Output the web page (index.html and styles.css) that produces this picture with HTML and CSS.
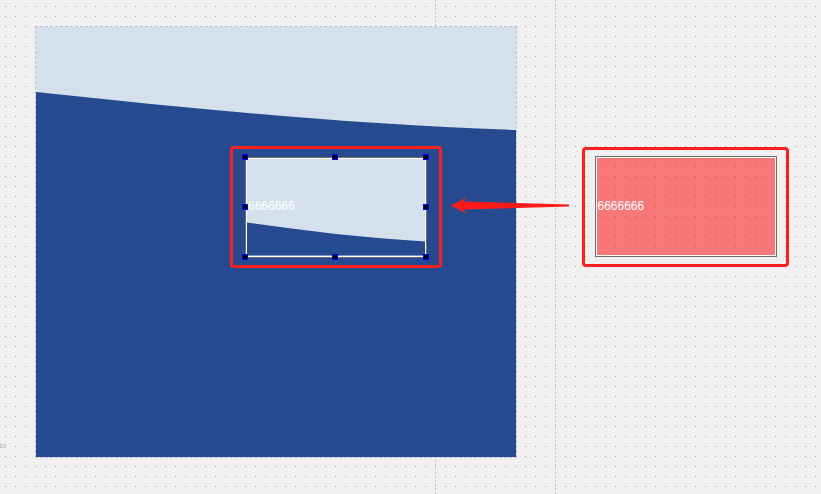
FILE: index.html
```html
<!DOCTYPE html>
<html>
<head>
<meta charset="utf-8">
<link rel="stylesheet" href="styles.css">
</head>
<body>
<div class="workspace">
  <div class="grid"></div>
  <div class="guide guide-a"></div>
  <div class="guide guide-b"></div>

  <div class="artboard">
    <svg class="art" width="480" height="430" viewBox="0 0 480 430">
      <rect x="0" y="0" width="480" height="430" fill="#d4e0ec"/>
      <path d="M0 65 C160 82 320 98 480 103 L480 430 L0 430 Z" fill="#254a8f"/>
    </svg>
  </div>

  <div class="select-box sel-left">
    <div class="frame">
      <div class="frame-inner thumb"><span class="label label-thumb">6666666</span></div>
      <span class="handle h-l h-t"></span>
      <span class="handle h-c h-t"></span>
      <span class="handle h-r h-t"></span>
      <span class="handle h-l h-m"></span>
      <span class="handle h-r h-m"></span>
      <span class="handle h-l h-b"></span>
      <span class="handle h-c h-b"></span>
      <span class="handle h-r h-b"></span>
    </div>
  </div>

  <svg class="arrow" width="128" height="26" viewBox="0 0 128 26">
    <polygon points="5,12.5 21,4 17,8.5 123,11.6 123,13.4 17,16.5 21,21" fill="#ff1a1a"/>
  </svg>

  <div class="select-box sel-right">
    <div class="frame">
      <div class="frame-inner pink"><span class="label label-pink">6666666</span></div>
    </div>
  </div>

  <div class="mini"></div>
</div>
</body>
</html>
```

FILE: styles.css
```css
html, body {
  margin: 0;
  padding: 0;
}

body {
  background: #f0f0f0;
  width: 821px;
  height: 494px;
  overflow: hidden;
  font-family: "Liberation Sans", Arial, sans-serif;
}

.workspace {
  position: relative;
  width: 821px;
  height: 494px;
}

.grid {
  position: absolute;
  inset: 0;
  background: repeating-linear-gradient(to right, transparent 0 5px, #9a9a9a 5px 6px, transparent 6px 10px);
  -webkit-mask-image: repeating-linear-gradient(to bottom, transparent 0 6px, #000 6px 7px, transparent 7px 10px);
  mask-image: repeating-linear-gradient(to bottom, transparent 0 6px, #000 6px 7px, transparent 7px 10px);
}

.guide {
  position: absolute;
  top: 0;
  bottom: 0;
  width: 1px;
  background: repeating-linear-gradient(to bottom, #c6c6c6 0 2px, transparent 2px 4px);
}

.guide-a { left: 435px; }
.guide-b { left: 555px; }

.artboard {
  position: absolute;
  left: 35px;
  top: 26px;
  width: 480px;
  height: 430px;
  border: 1px dashed #b9c0cb;
}

.art {
  display: block;
}

.select-box {
  position: absolute;
  box-sizing: border-box;
  border: 3px solid #ff1f1f;
  border-radius: 4px;
  display: flex;
  justify-content: center;
  align-items: center;
}

.sel-left {
  left: 230px;
  top: 146px;
  width: 212px;
  height: 122px;
}

.sel-right {
  left: 582px;
  top: 147px;
  width: 207px;
  height: 120px;
  align-items: flex-start;
  padding-top: 6px;
}

.frame {
  position: relative;
  width: 182px;
  height: 101px;
  box-sizing: border-box;
  border: 1px solid #6d6d6d;
}

.frame-inner {
  position: relative;
  height: 100%;
  box-sizing: border-box;
  border: 1px solid #ffffff;
  display: flex;
  align-items: center;
}

.thumb {
  background: #d4e0ec;
}

.thumb::before {
  content: "";
  position: absolute;
  inset: 0;
  background: #254a8f;
  clip-path: polygon(0 64px, 25% 70px, 50% 75.5px, 75% 79.8px, 100% 83px, 100% 100%, 0 100%);
}

.pink {
  background: rgba(255, 0, 0, 0.5);
}

.label {
  position: relative;
  color: #ffffff;
  font-size: 12px;
  line-height: 14px;
  margin-bottom: 2px;
}

.label-thumb {
  padding-left: 1px;
}

.label-pink {
  padding-left: 1px;
}

.handle {
  position: absolute;
  width: 6px;
  height: 6px;
  box-sizing: border-box;
  border: 1px solid #0000ff;
  background: #000000;
}

.h-l { left: -4px; }
.h-c { left: 86px; }
.h-r { left: 177px; }
.h-t { top: -4px; }
.h-m { top: 46px; }
.h-b { top: 96px; }

.arrow {
  position: absolute;
  left: 446px;
  top: 193px;
}

.mini {
  position: absolute;
  left: 0;
  top: 444px;
  width: 6px;
  height: 4px;
  box-sizing: border-box;
  border: 1px solid #c8c8c8;
  background: #e6e6e6;
}
```
